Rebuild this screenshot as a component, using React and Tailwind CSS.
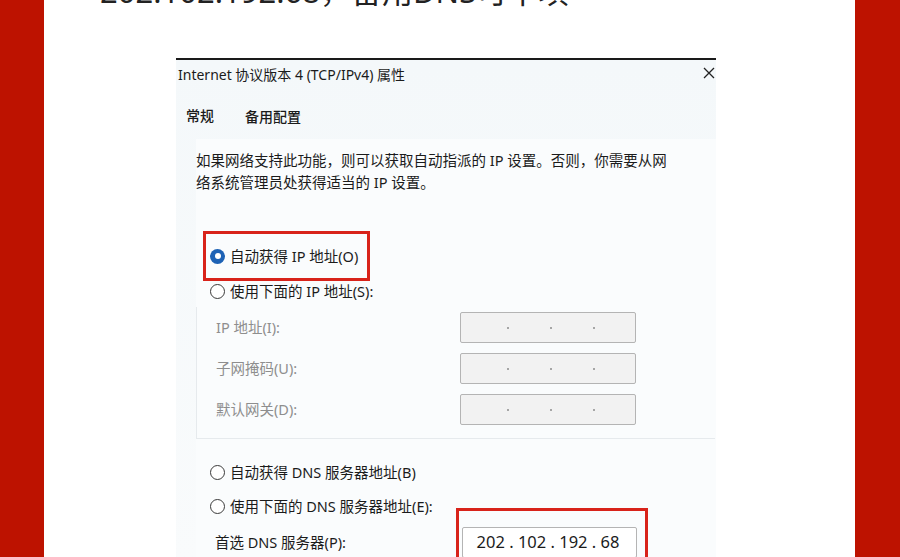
const font = {
  fontFamily: '"Noto Sans", "Noto Sans CJK SC", sans-serif',
};

function Radio({ checked }) {
  if (checked) {
    return (
      <span className="flex h-[15px] w-[15px] shrink-0 items-center justify-center rounded-full bg-[#1d62b5]">
        <span className="h-[6px] w-[6px] rounded-full bg-white" />
      </span>
    );
  }
  return (
    <span className="h-[15px] w-[15px] shrink-0 rounded-full border border-[#3a3a3a] bg-white" />
  );
}

function RadioRow({ checked, label, className = "" }) {
  return (
    <div className={`flex items-center gap-[5px] text-[14.5px] leading-[20px] text-[#1b1b1b] ${className}`}>
      <Radio checked={checked} />
      <span>{label}</span>
    </div>
  );
}

function EmptyIpBox() {
  return (
    <div className="flex h-[31px] w-[176px] items-center gap-[41px] rounded-[2px] border border-[#b4b4b4] bg-[#f2f2f2] pl-[46px]">
      <span className="h-[2px] w-[2px] rounded-full bg-[#8c8c8c]" />
      <span className="h-[2px] w-[2px] rounded-full bg-[#8c8c8c]" />
      <span className="h-[2px] w-[2px] rounded-full bg-[#8c8c8c]" />
    </div>
  );
}

function FieldRow({ label, children, muted }) {
  return (
    <div className="flex h-[41px] items-center justify-between pl-[19px] pr-[79px]">
      <span className={`text-[14.5px] ${muted ? "text-[#8e8e8e]" : "text-[#1b1b1b]"}`}>{label}</span>
      {children}
    </div>
  );
}

export default function App() {
  return (
    <div className="flex h-[557px] w-[900px] overflow-hidden bg-white" style={font}>
      <div className="w-[44px] shrink-0 bg-[#bd1200]" />

      <div className="flex flex-1 flex-col overflow-hidden">
        {/* caption running off the top edge */}
        <div className="mt-[-24px] whitespace-nowrap pl-[56px] text-[31px] leading-[31px] text-[#222]">
          202.102.192.68，备用DNS可不填
        </div>

        <div className="ml-[132px] mt-[51px] flex w-[540px] flex-1 flex-col border-t-2 border-[#1a1a1a] bg-gradient-to-b from-[#f4f8fa] to-[#f9fbfc]">
          <div className="flex h-[26px] items-center justify-between pl-[2px] pr-[1px] pt-[3px]">
            <span className="text-[14px] text-[#1b1b1b]">Internet 协议版本 4 (TCP/IPv4) 属性</span>
            <svg width="12" height="12" viewBox="0 0 12 12" className="mt-[-4px]">
              <path d="M1 1 L11 11 M11 1 L1 11" stroke="#222" strokeWidth="1.3" />
            </svg>
          </div>

          <div className="flex items-center pl-[10px] pt-[18px] text-[14px] font-medium text-[#1b1b1b]">
            <span className="w-[59px]">常规</span>
            <span className="mt-[2px]">备用配置</span>
          </div>

          <div className="ml-[20px] mt-[12px] flex flex-1 flex-col bg-[#fafcfd]">
            <p className="pt-[10px] text-[14.5px] leading-[22px] text-[#1b1b1b]">
              如果网络支持此功能，则可以获取自动指派的 IP 设置。否则，你需要从网
              <br />
              络系统管理员处获得适当的 IP 设置。
            </p>

            <div className="ml-[7px] mt-[38px] flex h-[50px] w-[167px] items-center border-[3px] border-[#d8231a] pl-[4px]">
              <RadioRow checked label="自动获得 IP 地址(O)" />
            </div>

            <RadioRow label="使用下面的 IP 地址(S):" className="ml-[14px] mt-[0px]" />

            <div className="mr-[1px] mt-[6px] border-b border-l border-[#e6eaed] pb-[8px]">
              <FieldRow label="IP 地址(I):" muted>
                <EmptyIpBox />
              </FieldRow>
              <FieldRow label="子网掩码(U):" muted>
                <EmptyIpBox />
              </FieldRow>
              <FieldRow label="默认网关(D):" muted>
                <EmptyIpBox />
              </FieldRow>
            </div>

            <RadioRow label="自动获得 DNS 服务器地址(B)" className="ml-[14px] mt-[23px]" />
            <RadioRow label="使用下面的 DNS 服务器地址(E):" className="ml-[14px] mt-[14px]" />

            <div className="relative mt-[11px] flex h-[31px] items-center justify-between pl-[19px] pr-[79px]">
              <span className="text-[14.5px] text-[#1b1b1b]">首选 DNS 服务器(P):</span>
              <div className="flex h-[31px] w-[175px] items-center justify-center rounded-[2px] border border-[#b4b4b4] bg-white pr-[3px] text-[16.5px] text-[#1b1b1b]">
                202 . 102 . 192 . 68
              </div>
              {/* highlight frame drawn over the field */}
              <div className="absolute right-[68px] top-[-19px] h-[70px] w-[192px] border-[3px] border-[#d8231a]" />
            </div>
          </div>
        </div>
      </div>

      <div className="w-[45px] shrink-0 bg-[#bd1200]" />
    </div>
  );
}
